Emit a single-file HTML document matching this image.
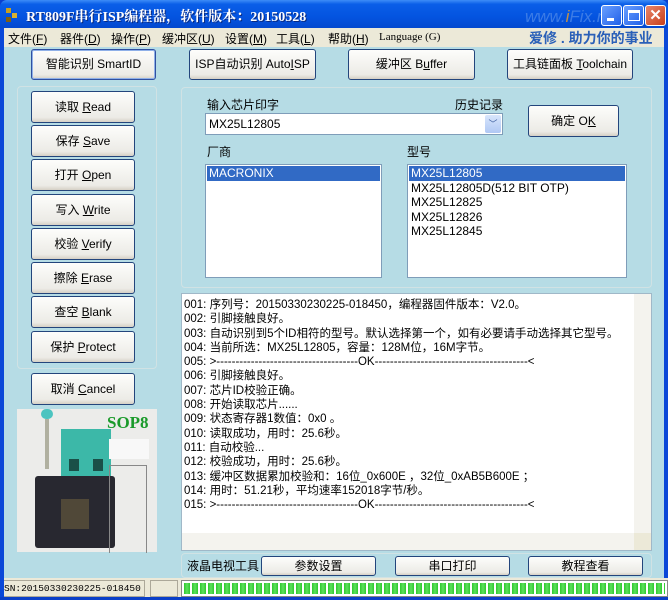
<!DOCTYPE html>
<html><head><meta charset="utf-8"><style>
*{margin:0;padding:0;box-sizing:border-box}
body{width:668px;height:600px;overflow:hidden;background:#0a3fd0;font-family:"Liberation Sans","Noto Sans CJK SC",sans-serif;font-size:12px;color:#000;position:relative}
.a{position:absolute}
#title{left:0;top:0;width:668px;height:28px;background:linear-gradient(#3d8cf7 0%,#0a5ee8 15%,#0454e0 60%,#0349cf 100%);border-radius:7px 7px 0 0}
#title .t{left:26px;top:6px;color:#fff;font-family:"Liberation Serif","Noto Serif CJK SC",serif;font-weight:bold;font-size:14px;white-space:nowrap;text-shadow:1px 1px #0a2a80}
.wb{top:5px;width:21px;height:21px;border:1px solid #fff;border-radius:3px;background:linear-gradient(135deg,#6aa0ff,#2160e8)}
#menu{left:4px;top:28px;width:660px;height:19px;background:#ece9d8}
#menu span{position:absolute;top:2px;font-size:12px;white-space:nowrap}
#client{left:4px;top:47px;width:660px;height:531px;background:#b6dce5}
.btn{position:absolute;background:linear-gradient(#fdfdfb,#ecebe6 85%,#d6d0c5);border:1px solid #23457c;border-radius:3px;text-align:center;font-size:12px;white-space:nowrap}
.grp{position:absolute;border:1px solid #d0e2e4;border-radius:4px}
.box{position:absolute;background:#fff;border:1px solid #7f9db9}
.log div{height:14.3px;line-height:14.3px;font-size:11.5px;white-space:nowrap}
</style></head><body>
<div id="title" class="a">
 <div class="a" style="left:6px;top:8px;width:5px;height:5px;background:#c8a020"></div>
 <div class="a" style="left:12px;top:13px;width:5px;height:5px;background:#d8b030"></div>
 <div class="a" style="left:6px;top:17px;width:5px;height:5px;background:#806010"></div>
 <div class="t a">RT809F串行ISP编程器，软件版本：20150528</div>
 <div class="a" style="left:525px;top:7px;color:#4a86e8;font-style:italic;font-size:17px;opacity:.8">www.<span style="color:#f0a020">i</span>Fix.net.cn</div>
 <div class="wb a" style="left:601px"><div class="a" style="left:5px;top:12px;width:7px;height:3px;background:#fff"></div></div>
 <div class="wb a" style="left:623px"><div class="a" style="left:4px;top:4px;width:12px;height:11px;border:1px solid #fff;border-top-width:3px"></div></div>
 <div class="wb a" style="left:645px;background:linear-gradient(135deg,#e8866a,#c8401c);color:#fff;font-weight:bold;font-size:15px;text-align:center;line-height:19px">✕</div>
</div>
<div id="menu" class="a">
 <span style="left:4px">文件(<u>F</u>)</span><span style="left:56px">器件(<u>D</u>)</span><span style="left:107px">操作(<u>P</u>)</span><span style="left:158px">缓冲区(<u>U</u>)</span><span style="left:221px">设置(<u>M</u>)</span><span style="left:272px">工具(<u>L</u>)</span><span style="left:324px">帮助(<u>H</u>)</span><span style="left:375px;font-family:'Liberation Serif',serif;font-size:11px;top:3px">Language (G)</span>
 <span style="left:525px;top:0;color:#2a60b8;font-weight:bold;font-size:14px">爱修 . 助力你的事业</span>
</div>
<div id="client" class="a"></div>
<div class="btn" style="left:31px;top:49px;width:125px;height:31px;line-height:29px;border-color:#3050a0;box-shadow:inset 0 0 0 1px #8fb0e8">智能识别 SmartID</div>
<div class="btn" style="left:189px;top:49px;width:127px;height:31px;line-height:29px">ISP自动识别 Auto<u>I</u>SP</div>
<div class="btn" style="left:348px;top:49px;width:127px;height:31px;line-height:29px">缓冲区 B<u>u</u>ffer</div>
<div class="btn" style="left:507px;top:49px;width:126px;height:31px;line-height:29px">工具链面板 <u>T</u>oolchain</div>
<div class="grp" style="left:17px;top:86px;width:140px;height:283px"></div>
<div class="btn" style="left:31px;top:91px;width:104px;height:32px;line-height:30px">读取 <u>R</u>ead</div>
<div class="btn" style="left:31px;top:125px;width:104px;height:32px;line-height:30px">保存 <u>S</u>ave</div>
<div class="btn" style="left:31px;top:159px;width:104px;height:32px;line-height:30px">打开 <u>O</u>pen</div>
<div class="btn" style="left:31px;top:194px;width:104px;height:32px;line-height:30px">写入 <u>W</u>rite</div>
<div class="btn" style="left:31px;top:228px;width:104px;height:32px;line-height:30px">校验 <u>V</u>erify</div>
<div class="btn" style="left:31px;top:262px;width:104px;height:32px;line-height:30px">擦除 <u>E</u>rase</div>
<div class="btn" style="left:31px;top:296px;width:104px;height:32px;line-height:30px">查空 <u>B</u>lank</div>
<div class="btn" style="left:31px;top:331px;width:104px;height:32px;line-height:30px">保护 <u>P</u>rotect</div>
<div class="btn" style="left:31px;top:373px;width:104px;height:32px;line-height:30px">取消 <u>C</u>ancel</div>
<div class="a" style="left:17px;top:409px;width:140px;height:143px;background:#ececea">
 <div class="a" style="left:24px;top:0;width:12px;height:10px;border-radius:6px;background:#4cc4c0"></div>
 <div class="a" style="left:28px;top:10px;width:4px;height:50px;background:#b0b0a0"></div>
 <div class="a" style="left:44px;top:20px;width:50px;height:80px;background:#3cb8a8"></div>
 <div class="a" style="left:52px;top:50px;width:10px;height:12px;background:#1a5048"></div>
 <div class="a" style="left:76px;top:50px;width:10px;height:12px;background:#1a5048"></div>
 <div class="a" style="left:18px;top:67px;width:80px;height:72px;background:#282830;border-radius:3px"></div>
 <div class="a" style="left:44px;top:90px;width:28px;height:30px;background:#504838"></div>
 <div class="a" style="left:90px;top:4px;color:#1a9a2a;font-family:'Liberation Serif',serif;font-weight:bold;font-size:17px">SOP8</div>
 <div class="a" style="left:92px;top:30px;width:40px;height:20px;background:#f8f8f8"></div>
 <div class="a" style="left:92px;top:56px;width:38px;height:88px;border:1px solid #888;border-bottom:0"></div>
</div>
<div class="grp" style="left:181px;top:87px;width:471px;height:201px"></div>
<div class="a" style="left:207px;top:96px">输入芯片印字</div>
<div class="a" style="left:455px;top:96px">历史记录</div>
<div class="box" style="left:205px;top:113px;width:298px;height:22px;padding:3px 3px;font-size:12px">MX25L12805
 <div class="a" style="right:1px;top:1px;width:16px;height:18px;background:linear-gradient(#d8e6fc,#b0c8f4);border-radius:2px;color:#4060a0;font-size:9px;text-align:center;line-height:18px">﹀</div></div>
<div class="btn" style="left:528px;top:105px;width:91px;height:32px;line-height:30px">确定 O<u>K</u></div>
<div class="a" style="left:207px;top:143px">厂商</div>
<div class="a" style="left:407px;top:143px">型号</div>
<div class="box" style="left:205px;top:164px;width:177px;height:114px;padding:1px">
 <div style="background:#316ac5;color:#fff;height:15px;line-height:15px;padding-left:2px">MACRONIX</div></div>
<div class="box" style="left:407px;top:164px;width:220px;height:114px;padding:1px;line-height:14.3px">
 <div style="background:#316ac5;color:#fff;height:15px;line-height:15px;padding-left:2px">MX25L12805</div>
 <div style="padding-left:2px">MX25L12805D(512 BIT OTP)</div>
 <div style="padding-left:2px">MX25L12825</div>
 <div style="padding-left:2px">MX25L12826</div>
 <div style="padding-left:2px">MX25L12845</div></div>
<div class="box log" style="left:181px;top:293px;width:471px;height:258px;padding:4px 0 0 2px;border-color:#a0b8c8">
<div>001: 序列号：20150330230225-018450，编程器固件版本：V2.0。</div>
<div>002: 引脚接触良好。</div>
<div>003: 自动识别到5个ID相符的型号。默认选择第一个，如有必要请手动选择其它型号。</div>
<div>004: 当前所选：MX25L12805，容量：128M位，16M字节。</div>
<div>005: &gt;-------------------------------------OK----------------------------------------&lt;</div>
<div>006: 引脚接触良好。</div>
<div>007: 芯片ID校验正确。</div>
<div>008: 开始读取芯片......</div>
<div>009: 状态寄存器1数值：0x0 。</div>
<div>010: 读取成功，用时：25.6秒。</div>
<div>011: 自动校验...</div>
<div>012: 校验成功，用时：25.6秒。</div>
<div>013: 缓冲区数据累加校验和：16位_0x600E ，32位_0xAB5B600E ；</div>
<div>014: 用时：51.21秒，平均速率152018字节/秒。</div>
<div>015: &gt;-------------------------------------OK----------------------------------------&lt;</div>
<div class="a" style="right:0;top:0;width:17px;height:239px;background:#f4f3ee"></div>
<div class="a" style="left:0;bottom:0;width:453px;height:17px;background:#f4f3ee"></div>
<div class="a" style="right:0;bottom:0;width:17px;height:17px;background:#ece9d8"></div>
</div>
<div class="grp" style="left:181px;top:553px;width:471px;height:25px"></div>
<div class="a" style="left:187px;top:557px;font-size:12px">液晶电视工具</div>
<div class="btn" style="left:261px;top:556px;width:115px;height:20px;line-height:18px">参数设置</div>
<div class="btn" style="left:395px;top:556px;width:115px;height:20px;line-height:18px">串口打印</div>
<div class="btn" style="left:528px;top:556px;width:115px;height:20px;line-height:18px">教程查看</div>
<div class="a" style="left:0;top:578px;width:668px;height:20px;background:#ece9d8"></div>
<div class="a" style="left:2px;top:580px;width:143px;height:17px;border:1px solid #aca899;font-family:'Liberation Mono',monospace;font-size:9.5px;line-height:15px;padding-left:1px;white-space:nowrap;overflow:hidden">SN:20150330230225-018450</div>
<div class="a" style="left:150px;top:580px;width:28px;height:17px;border:1px solid #aca899"></div>
<div class="a" style="left:181px;top:580px;width:487px;height:17px;border:1px solid #888;background:#fff;padding:2px;">
 <div style="width:100%;height:100%;background:repeating-linear-gradient(90deg,#2ec82e 0,#5ee05e 3px,#2ec82e 6px,#fff 6px,#fff 8px)"></div></div>
<div class="a" style="left:0;top:28px;width:4px;height:572px;background:#0a48d8"></div>
<div class="a" style="left:664px;top:28px;width:4px;height:550px;background:#0a48d8"></div>
<div class="a" style="left:0;top:597px;width:668px;height:3px;background:#0a3fc8"></div>
</body></html>
